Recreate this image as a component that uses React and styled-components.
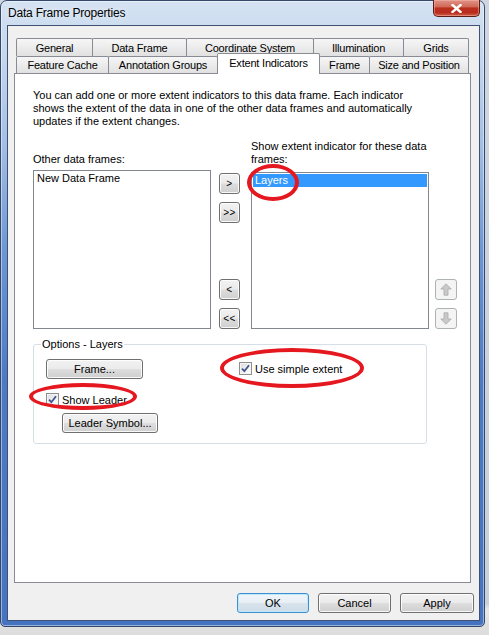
import React from "react";
import styled, { createGlobalStyle, css } from "styled-components";

const GlobalStyle = createGlobalStyle`
  html, body { margin: 0; padding: 0; }
  body {
    width: 489px;
    height: 635px;
    overflow: hidden;
    background: linear-gradient(to bottom, #cfd6df 0%, #c8d0da 95%, #e8e8e8 96%, #dcdcdc 100%);
    font-family: "Liberation Sans", Arial, sans-serif;
    font-size: 11px;
    color: #000;
  }
  * { box-sizing: border-box; }
`;

const Window = styled.div`
  width: 485px;
  height: 627px;
  border: 1px solid #33486a;
  border-radius: 7px 7px 5px 5px;
  background: linear-gradient(
    to bottom,
    #d4e2f2 0px,
    #c6d8ee 50px,
    #a5c0e5 140px,
    #6d96d3 250px,
    #4c7bc4 380px,
    #4673bf 100%
  );
  box-shadow: inset 0 0 0 1px rgba(255, 255, 255, 0.45);
  display: flex;
  flex-direction: column;
  padding: 0 4px 5px 6px;
`;

const TitleBar = styled.div`
  height: 24px;
  display: flex;
  justify-content: space-between;
  align-items: flex-start;
  padding-left: 1px;
`;

const Title = styled.div`
  font-size: 12px;
  line-height: 15px;
  padding-top: 5px;
  letter-spacing: -0.2px;
  color: #000;
  text-shadow: 0 0 6px rgba(255, 255, 255, 0.9);
`;

const CloseButton = styled.div`
  width: 47px;
  height: 17px;
  margin-top: -1px;
  border: 1px solid #5a1c15;
  border-top: none;
  border-radius: 0 0 5px 5px;
  background: linear-gradient(
    to bottom,
    #df9388 0%,
    #d06a59 42%,
    #bb2f1f 50%,
    #b72c1d 78%,
    #d0604a 100%
  );
  box-shadow: inset 0 0 0 1px rgba(255, 190, 180, 0.45);
  display: flex;
  align-items: center;
  justify-content: center;
`;

const Client = styled.div`
  flex: 1;
  border: 1px solid #3e5173;
  background: #f0f0f0;
  display: flex;
  flex-direction: column;
  padding-top: 12px;
`;

const TabStrip = styled.div`
  margin-left: 8px;
  display: flex;
  flex-direction: column;
`;

const TabRow = styled.div`
  display: flex;
  align-items: flex-end;
  height: ${(p) => (p.$front ? 17 : 18)}px;
  position: relative;
  z-index: ${(p) => (p.$front ? 2 : 1)};
`;

const Tab = styled.div`
  width: ${(p) => p.$w}px;
  height: ${(p) => (p.$active ? 21 : p.$front ? 17 : 18)}px;
  margin-left: -1px;
  &:first-child { margin-left: 0; }
  border: 1px solid #898c95;
  border-bottom: none;
  border-radius: 2px 2px 0 0;
  display: flex;
  align-items: center;
  justify-content: center;
  white-space: nowrap;
  letter-spacing: -0.2px;
  ${(p) =>
    p.$active
      ? css`
          background: #fff;
          margin-bottom: -1px;
          padding-bottom: 2px;
          position: relative;
          z-index: 3;
        `
      : css`
          background: linear-gradient(to bottom, #f6f6f6 0%, #ececec 50%, #e1e1e1 100%);
        `}
`;

const Panel = styled.div`
  flex: 1;
  margin: 0 8px 0 6px;
  border: 1px solid #898c95;
  background: #fff;
  padding: 15px 0 0 18px;
  display: flex;
  flex-direction: column;
  position: relative;
  z-index: 1;
`;

const Text = styled.div`
  line-height: 13px;
  white-space: nowrap;
`;

const ListsGrid = styled.div`
  margin-top: 12px;
  display: grid;
  grid-template-columns: 186px 32px 184px 22px;
  grid-template-rows: auto 159px;
  row-gap: 4px;
  justify-items: start;
`;

const Label = styled(Text)`
  align-self: end;
  grid-column: ${(p) => p.$col};
`;

const ListBox = styled.div`
  width: 178px;
  height: ${(p) => p.$h}px;
  align-self: end;
  grid-column: ${(p) => p.$col};
  border: 1px solid #828790;
  background: #fff;
  padding: 1px;
  position: relative;
`;

const ListItem = styled.div`
  height: 13px;
  line-height: 13px;
  padding-left: 2px;
  ${(p) =>
    p.$selected &&
    css`
      background: #3399ff;
      color: #fff;
    `}
`;

const ButtonColumn = styled.div`
  height: 100%;
  display: flex;
  flex-direction: column;
  padding-top: 3px;
  gap: 8px;
`;

const Spacer = styled.div`
  flex: 1;
`;

const baseButton = css`
  border: 1px solid #707070;
  border-radius: 3px;
  background: linear-gradient(to bottom, #f2f2f2 0%, #ebebeb 48%, #dddddd 52%, #cfcfcf 100%);
  box-shadow: inset 0 0 0 1px rgba(255, 255, 255, 0.85);
  display: flex;
  align-items: center;
  justify-content: center;
  font-family: "Liberation Sans", Arial, sans-serif;
  font-size: 11px;
  color: #000;
  white-space: nowrap;
`;

const SmallButton = styled.div`
  ${baseButton}
  width: 21px;
  height: 21px;
  font-size: 10px;
  letter-spacing: 0.5px;
  padding-bottom: 1px;
`;

const IconButton = styled.div`
  width: 22px;
  height: 21px;
  border: 1px solid #adb2b5;
  border-radius: 3px;
  background: #f4f4f4;
  display: flex;
  align-items: center;
  justify-content: center;
`;

const PushButton = styled.div`
  ${baseButton}
  width: ${(p) => p.$w}px;
  height: 20px;
  margin-left: ${(p) => p.$ml || 0}px;
  margin-top: ${(p) => p.$mt || 0}px;
  ${(p) =>
    p.$default &&
    css`
      border-color: #3c8fd0;
      box-shadow: inset 0 0 0 1px #bfe6fb;
      background: linear-gradient(to bottom, #f0f6fa 0%, #e7eff5 48%, #d8e3ec 52%, #cfdce6 100%);
    `}
`;

const GroupBox = styled.fieldset`
  margin: 9px 0 0 0;
  width: 394px;
  border: 1px solid #d5dfe5;
  border-radius: 3px;
  padding: 8px 0 10px 12px;
  min-width: 0;
`;

const Legend = styled.legend`
  padding: 0 1px;
  margin-left: -5px;
  line-height: 13px;
`;

const GroupGrid = styled.div`
  display: grid;
  grid-template-columns: 193px 1fr;
  align-items: start;
`;

const GroupColumn = styled.div`
  display: flex;
  flex-direction: column;
  align-items: flex-start;
  padding-top: ${(p) => p.$pt || 0}px;
`;

const CheckRow = styled.div`
  display: inline-flex;
  align-items: center;
  gap: 3px;
  height: 13px;
  margin-top: ${(p) => p.$mt || 0}px;
  position: relative;
  white-space: nowrap;
`;

const CheckBox = styled.span`
  width: 13px;
  height: 13px;
  border: 1px solid #8e8f8f;
  background: linear-gradient(135deg, #dcdcdc 0%, #f2f2f2 60%, #ffffff 100%);
  box-shadow: inset 0 0 0 1px #f4f4f4;
  display: inline-flex;
  align-items: center;
  justify-content: center;
`;

const Ellipse = styled.div`
  position: absolute;
  left: ${(p) => p.$x}px;
  top: ${(p) => p.$y}px;
  width: ${(p) => p.$w}px;
  height: ${(p) => p.$h}px;
  border: 4px solid #e5171f;
  border-radius: 50%;
  pointer-events: none;
  z-index: 5;
`;

const ButtonRow = styled.div`
  display: flex;
  justify-content: flex-end;
  gap: 9px;
  padding: 10px 5px 7px 0;
`;

const Check = () => (
  <svg width="9" height="9" viewBox="0 0 9 9">
    <path d="M1 4.6 L3.4 7.2 L8 1.2" fill="none" stroke="#41548f" strokeWidth="1.8" />
  </svg>
);

const Arrow = ({ down }) => (
  <svg width="12" height="13" viewBox="0 0 12 13" style={down ? { transform: "rotate(180deg)" } : undefined}>
    <path d="M6 0.8 L11.2 6 H8 V12.2 H4 V6 H0.8 Z" fill="#c9c9c9" stroke="#a9a9a9" strokeWidth="0.8" />
  </svg>
);

const CloseX = () => (
  <svg width="11" height="9" viewBox="0 0 11 9">
    <path d="M1.5 1 L9.5 8 M9.5 1 L1.5 8" stroke="#fff" strokeWidth="2.4" strokeLinecap="square" />
  </svg>
);

const row1 = [
  ["General", 77],
  ["Data Frame", 95],
  ["Coordinate System", 128],
  ["Illumination", 91],
  ["Grids", 66],
];
const row2 = [
  ["Feature Cache", 93],
  ["Annotation Groups", 110],
  ["Extent Indicators", 103, true],
  ["Frame", 51],
  ["Size and Position", 100],
];

export default function App() {
  return (
    <>
      <GlobalStyle />
      <Window>
        <TitleBar>
          <Title>Data Frame Properties</Title>
          <CloseButton>
            <CloseX />
          </CloseButton>
        </TitleBar>
        <Client>
          <TabStrip>
            <TabRow>
              {row1.map(([t, w]) => (
                <Tab key={t} $w={w}>
                  {t}
                </Tab>
              ))}
            </TabRow>
            <TabRow $front>
              {row2.map(([t, w, a]) => (
                <Tab key={t} $w={w} $front $active={a}>
                  {t}
                </Tab>
              ))}
            </TabRow>
          </TabStrip>
          <Panel>
            <Text>
              You can add one or more extent indicators to this data frame. Each indicator
              <br />
              shows the extent of the data in one of the other data frames and automatically
              <br />
              updates if the extent changes.
            </Text>
            <ListsGrid>
              <Label $col={1}>Other data frames:</Label>
              <Label $col={3}>
                Show extent indicator for these data
                <br />
                frames:
              </Label>
              <ListBox $h={159} $col={1}>
                <ListItem>New Data Frame</ListItem>
              </ListBox>
              <ButtonColumn>
                <SmallButton>&gt;</SmallButton>
                <SmallButton>&gt;&gt;</SmallButton>
                <Spacer />
                <SmallButton>&lt;</SmallButton>
                <SmallButton>&lt;&lt;</SmallButton>
              </ButtonColumn>
              <ListBox $h={157}>
                <ListItem $selected>Layers</ListItem>
                <Ellipse $x={-5} $y={-9} $w={52} $h={37} />
              </ListBox>
              <ButtonColumn>
                <Spacer />
                <IconButton>
                  <Arrow />
                </IconButton>
                <IconButton>
                  <Arrow down />
                </IconButton>
              </ButtonColumn>
            </ListsGrid>
            <GroupBox>
              <Legend>Options - Layers</Legend>
              <GroupGrid>
                <GroupColumn>
                  <PushButton $w={97}>Frame...</PushButton>
                  <CheckRow $mt={14}>
                    <CheckBox>
                      <Check />
                    </CheckBox>
                    Show Leader
                    <Ellipse $x={-17} $y={-10} $w={108} $h={27} />
                  </CheckRow>
                  <PushButton $w={96} $ml={16} $mt={7}>
                    Leader Symbol...
                  </PushButton>
                </GroupColumn>
                <GroupColumn $pt={3}>
                  <CheckRow>
                    <CheckBox>
                      <Check />
                    </CheckBox>
                    Use simple extent
                    <Ellipse $x={-19} $y={-14} $w={144} $h={40} />
                  </CheckRow>
                </GroupColumn>
              </GroupGrid>
            </GroupBox>
          </Panel>
          <ButtonRow>
            <PushButton $w={72} $default>
              OK
            </PushButton>
            <PushButton $w={73}>Cancel</PushButton>
            <PushButton $w={74}>Apply</PushButton>
          </ButtonRow>
        </Client>
      </Window>
    </>
  );
}
